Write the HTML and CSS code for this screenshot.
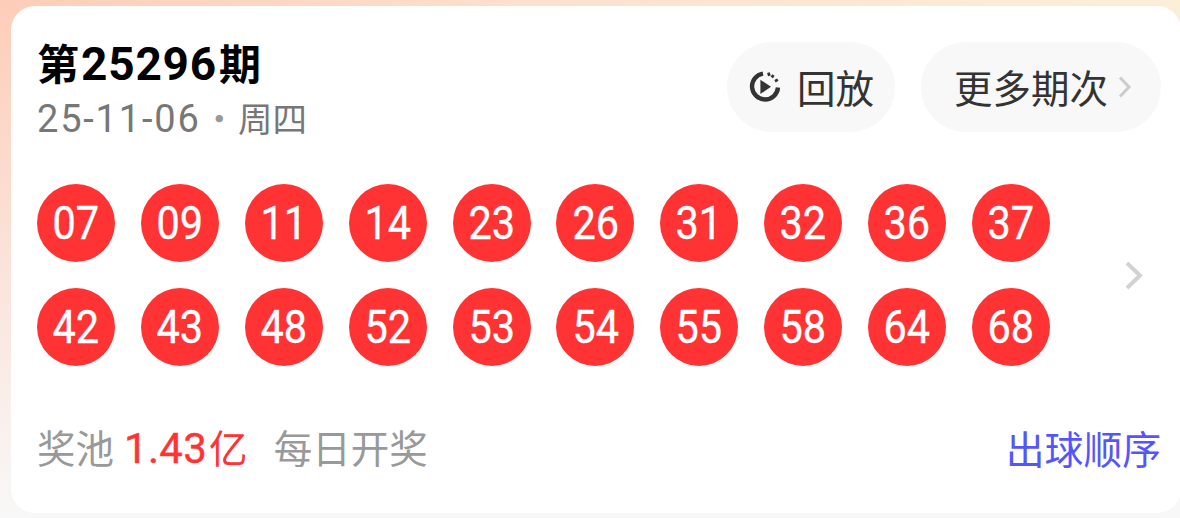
FILE: index.html
```html
<!DOCTYPE html>
<html lang="zh-CN">
<head>
    <meta charset="UTF-8">
    <meta name="viewport" content="width=device-width, initial-scale=1.0">
    <title>第25296期</title>
    <link rel="stylesheet" href="styles.css">
</head>
<body>
    <div class="card">
        <div class="head">
            <div class="info">
                <h2 class="issue">第<span class="issue-num">25296</span>期</h2>
                <div class="date"><span class="date-num">25-11-06</span><span class="dot">·</span>周四</div>
            </div>
            <div class="actions">
                <div class="pill pill-replay">
                    <svg class="replay-icon" width="36" height="36" viewBox="0 0 36 36">
                        <path d="M16 4.6A13 13 0 1 0 31 18.5" fill="none" stroke="#333" stroke-width="4.4"/>
                        <path d="M21.4 3.6l1 3.2M26.4 6l-1.6 2.6M30.8 10.6l-2.8 1.6" fill="none" stroke="#333" stroke-width="2.8"/>
                        <path d="M13.4 10.8l10.6 7-10.6 7.2z" fill="#333"/>
                    </svg>
                    <span class="pill-text">回放</span>
                </div>
                <div class="pill pill-more">
                    <span class="pill-text">更多期次</span>
                    <svg width="14" height="24" viewBox="0 0 14 24">
                        <path d="M2 2.5l9 9.5-9 9.5" fill="none" stroke="#ccc" stroke-width="3"/>
                    </svg>
                </div>
            </div>
        </div>
        <div class="draw">
            <div class="balls">
                <div class="ball"><span>07</span></div>
                <div class="ball"><span>09</span></div>
                <div class="ball"><span>11</span></div>
                <div class="ball"><span>14</span></div>
                <div class="ball"><span>23</span></div>
                <div class="ball"><span>26</span></div>
                <div class="ball"><span>31</span></div>
                <div class="ball"><span>32</span></div>
                <div class="ball"><span>36</span></div>
                <div class="ball"><span>37</span></div>
                <div class="ball"><span>42</span></div>
                <div class="ball"><span>43</span></div>
                <div class="ball"><span>48</span></div>
                <div class="ball"><span>52</span></div>
                <div class="ball"><span>53</span></div>
                <div class="ball"><span>54</span></div>
                <div class="ball"><span>55</span></div>
                <div class="ball"><span>58</span></div>
                <div class="ball"><span>64</span></div>
                <div class="ball"><span>68</span></div>
            </div>
            <svg class="draw-arrow" width="20" height="30" viewBox="0 0 20 30">
                <path d="M3 3l13 12.5L3 28" fill="none" stroke="#d2d2d2" stroke-width="4"/>
            </svg>
        </div>
        <div class="foot">
            <div class="pool">奖池<span class="money"><span class="money-num">1.43</span>亿</span><span class="freq">每日开奖</span></div>
            <a class="order">出球顺序</a>
        </div>
    </div>
</body>
</html>
```

FILE: styles.css
```css
html, body {
    height: 100%;
}

body {
    margin: 0;
    padding: 6px 0 5px 11px;
    box-sizing: border-box;
    overflow: hidden;
    font-family: "Noto Sans CJK SC", "Noto Sans", sans-serif;
    background: linear-gradient(180deg, rgba(247, 247, 247, 0) 0, #f8f8f8 100%),
        linear-gradient(90deg, #fdcdb9 0, #fde0d0 45%, #fbefd9 100%);
}

.card {
    width: 1170px;
    height: 507px;
    box-sizing: border-box;
    padding: 36px 20px 0 26px;
    background-color: #fff;
    border-radius: 24px;
}

.head {
    display: flex;
    justify-content: space-between;
}

.info {
    margin-top: -3px;
}

.issue {
    margin: 0;
    font-size: 42px;
    line-height: 46px;
    font-weight: 700;
    color: #000;
}

.issue-num {
    margin: 0 2px;
    font-family: Roboto, sans-serif;
    font-size: 46px;
    letter-spacing: 0.8px;
}

.date {
    margin-top: 10px;
    font-size: 34.5px;
    line-height: 40px;
    color: #777;
}

.date-num {
    font-family: Roboto, sans-serif;
    font-size: 38px;
    letter-spacing: 1.8px;
}

.dot {
    margin: 0 1.5px;
    color: #999;
}

.actions {
    display: flex;
    gap: 26px;
}

.pill {
    display: flex;
    align-items: center;
    height: 90px;
    box-sizing: border-box;
    border-radius: 45px;
    background-color: #f8f8f8;
    font-size: 38.5px;
    color: #333;
}

.pill-text {
    margin-top: -3px;
}

.pill-replay {
    width: 168px;
    gap: 14px;
    padding-left: 20px;
}

.pill-more {
    width: 240px;
    gap: 10px;
    padding-left: 33px;
}

.draw {
    display: flex;
    align-items: center;
    margin-top: 45px;
}

.balls {
    display: grid;
    grid-template-columns: repeat(10, 78px);
    gap: 26px 25.9px;
}

.ball {
    width: 78px;
    height: 78px;
    border-radius: 50%;
    background-color: #ff3333;
    color: #fff;
    font-family: Roboto, sans-serif;
    font-size: 46px;
    line-height: 78px;
    -webkit-text-stroke: 0.4px #fff;
    text-align: center;
}

.ball span {
    display: inline-block;
    transform: scaleX(0.9);
}

.draw-arrow {
    margin-left: 74px;
}

.foot {
    display: flex;
    justify-content: space-between;
    align-items: center;
    margin-top: 54px;
    font-size: 38.5px;
    line-height: 52px;
}

.pool {
    color: #999;
}

.money {
    margin-left: 10px;
    color: #ff3333;
}

.money-num {
    margin-right: 2px;
    font-family: Roboto, sans-serif;
    font-size: 42px;
    letter-spacing: 0.3px;
    -webkit-text-stroke: 0.4px #ff3333;
}

.freq {
    margin-left: 26px;
}

.order {
    margin-top: -2px;
    font-size: 38.8px;
    color: #5555ff;
}
```
